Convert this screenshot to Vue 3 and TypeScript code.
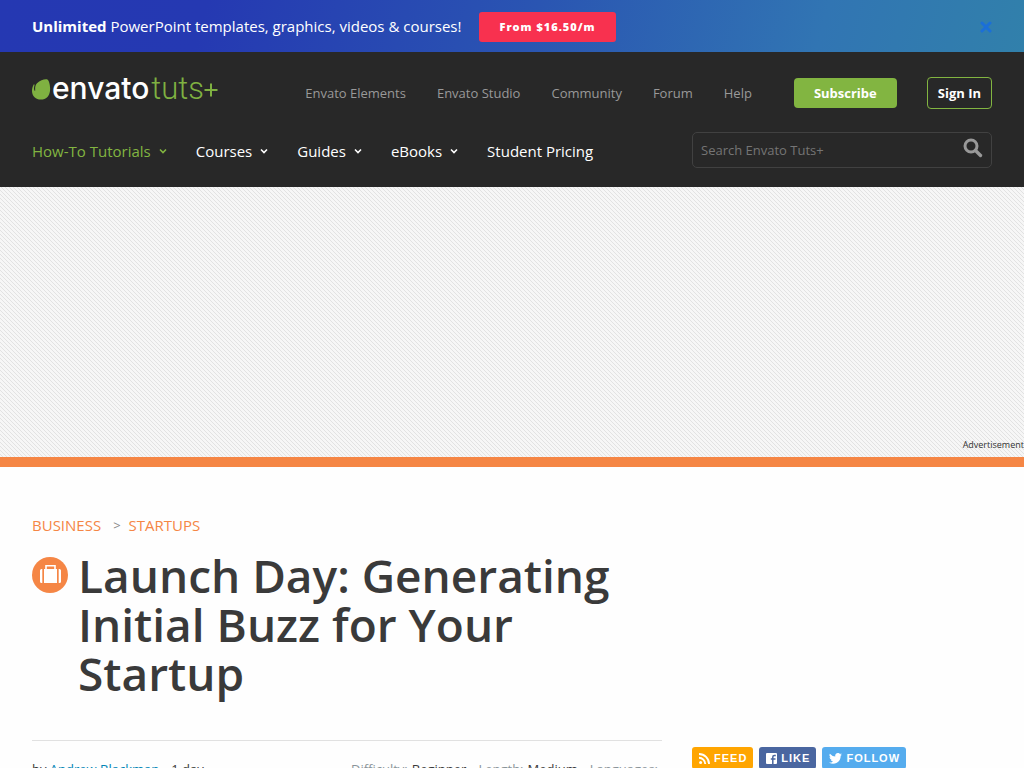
<script setup lang="ts">
import { ref } from 'vue'

interface NavItem {
  label: string
  menu: boolean
  active?: boolean
}

const siteLinks: string[] = ['Envato Elements', 'Envato Studio', 'Community', 'Forum', 'Help']
const sections: NavItem[] = [
  { label: 'How-To Tutorials', menu: true, active: true },
  { label: 'Courses', menu: true },
  { label: 'Guides', menu: true },
  { label: 'eBooks', menu: true },
  { label: 'Student Pricing', menu: false },
]
const query = ref('')
const promoOpen = ref(true)
</script>

<template>
  <div class="page">
    <div v-if="promoOpen" class="promo">
      <p class="promo-text"><strong>Unlimited</strong> PowerPoint templates, graphics, videos &amp; courses!</p>
      <a class="promo-cta" href="#">From $16.50/m</a>
      <button class="promo-close" type="button" aria-label="Close" @click="promoOpen = false">
        <svg width="12" height="12" viewBox="0 0 12 12" aria-hidden="true">
          <path d="M2 2L10 10M10 2L2 10" stroke="#1b6fd8" stroke-width="3" stroke-linecap="round" />
        </svg>
      </button>
    </div>

    <header class="header">
      <div class="top-row">
        <a class="logo" href="#" aria-label="Envato Tuts+">
          <svg class="leaf" width="19" height="21" viewBox="0 0 19 21" aria-hidden="true">
            <path d="M15.4 .4C13.400-.4 8.300.8 5 4.200C2.600 6.900 3.200 9.800 3.200 11.600C3.200 12.200 2.700 12.100 2.500 11.600C1.700 10 2 8.200 2.500 6.300C2.700 5.300 2 5 1.600 5.700C.5 7.600 0 9.500 0 11.900C0 17 3.900 20.500 8.800 20.500C14.300 20.500 17.300 17 18 11.900C18.600 7.300 17.300 1.800 15.400 .4Z" fill="#7fb141" />
          </svg>
          <span class="logo-text"><span class="logo-main">envato</span><span class="logo-sub">tuts</span></span>
          <svg class="plus" width="14" height="14" viewBox="0 0 14 14" aria-hidden="true"><path d="M7 0.500V13.500M.5 7H13.500" stroke="#7fb141" stroke-width="2" /></svg>
        </a>
        <nav class="site-nav" aria-label="Envato sites">
          <a v-for="link in siteLinks" :key="link" href="#">{{ link }}</a>
        </nav>
        <a class="subscribe" href="#">Subscribe</a>
        <a class="sign-in" href="#">Sign In</a>
      </div>

      <div class="bottom-row">
        <nav class="main-nav" aria-label="Main">
          <a v-for="item in sections" :key="item.label" href="#" :class="{ active: item.active }">
            {{ item.label }}
            <svg v-if="item.menu" width="8" height="6" viewBox="0 0 8 6" aria-hidden="true">
              <path d="M1 1.500L4 4.500L7 1.500" fill="none" stroke="currentColor" stroke-width="1.600" />
            </svg>
          </a>
        </nav>
        <form class="search" role="search" @submit.prevent>
          <input v-model="query" type="search" aria-label="Search" placeholder="Search Envato Tuts+">
          <button type="submit" aria-label="Search">
            <svg width="20" height="20" viewBox="0 0 20 20" aria-hidden="true">
              <circle cx="8" cy="8" r="6" fill="none" stroke="#999" stroke-width="3" />
              <path d="M12.500 12.500L17.500 17.500" stroke="#999" stroke-width="3.400" stroke-linecap="round" />
            </svg>
          </button>
        </form>
      </div>
    </header>

    <aside class="ad"><span>Advertisement</span></aside>

    <main class="content">
      <article class="post">
        <nav class="crumbs" aria-label="Breadcrumb">
          <a href="#">BUSINESS</a><span>&gt;</span><a href="#">STARTUPS</a>
        </nav>
        <div class="title-row">
          <svg class="badge" width="36" height="36" viewBox="0 0 36 36" aria-hidden="true">
            <circle cx="18" cy="18" r="18" fill="#f58645" />
            <path d="M14 12V8.800H23V12" fill="none" stroke="#fff" stroke-width="1.600" />
            <path d="M12 12H25V26H12Z" fill="#fff" />
            <path d="M10.300 12V26H9.500Q8 26 8 24.500V13.500Q8 12 9.500 12ZM26.700 12V26H27.500Q29 26 29 24.500V13.500Q29 12 27.500 12Z" fill="#fff" />
          </svg>
          <h1>Launch Day: Generating Initial Buzz for Your Startup</h1>
        </div>
        <div class="meta">
          <div class="byline">by <a href="#">Andrew Blackman</a><time>1 day</time></div>
          <dl class="facts">
            <div><dt>Difficulty:</dt><dd>Beginner</dd></div>
            <div><dt>Length:</dt><dd>Medium</dd></div>
            <div><dt>Languages:</dt></div>
          </dl>
        </div>
      </article>

      <aside class="social">
        <a class="feed" href="#">
          <svg width="11" height="11" viewBox="0 0 11 11" aria-hidden="true">
            <circle cx="1.600" cy="9.400" r="1.500" fill="#fff" />
            <path d="M0 4.800A6.200 6.200 0 0 1 6.200 11M0 1A10 10 0 0 1 10 11" fill="none" stroke="#fff" stroke-width="1.900" />
          </svg>FEED
        </a>
        <a class="like" href="#">
          <svg width="11" height="11" viewBox="0 0 11 11" aria-hidden="true">
            <rect width="11" height="11" rx="1" fill="#fff" />
            <path d="M6.800 11V6.700M9.800 2.500H8.400Q6.800 2.500 6.800 4V6.700M4.800 6H9.500" fill="none" stroke="#4a66a0" stroke-width="1.500" />
          </svg>LIKE
        </a>
        <a class="follow" href="#">
          <svg width="13" height="11" viewBox="0 0 24 20" aria-hidden="true">
            <path d="M24 2.400a10 10 0 0 1-2.800.8A5 5 0 0 0 23.300.5a10 10 0 0 1-3.100 1.200A4.900 4.900 0 0 0 11.700 6.200 14 14 0 0 1 1.700 1a4.900 4.900 0 0 0 1.500 6.600 5 5 0 0 1-2.200-.6 4.900 4.900 0 0 0 3.900 4.900 5 5 0 0 1-2.200.1 4.900 4.900 0 0 0 4.600 3.400A9.900 9.900 0 0 1 0 17.500 14 14 0 0 0 21.500 5.100 10 10 0 0 0 24 2.400Z" fill="#fff" />
          </svg>FOLLOW
        </a>
      </aside>
    </main>
  </div>
</template>

<style>
html, body {
  margin: 0;
  background: #fefefe;
}
body {
  height: 100vh;
  overflow: hidden;
}
</style>

<style scoped>
.page {
  font-family: "Open Sans", "Noto Sans", sans-serif;
  font-size: 14px;
  color: #3a3a3a;
}
a {
  color: inherit;
  text-decoration: none;
}
button {
  border: 0;
  padding: 0;
  background: none;
  cursor: pointer;
}
svg {
  display: block;
  flex: none;
}
.promo {
  display: flex;
  align-items: center;
  gap: 18px;
  box-sizing: border-box;
  height: 52px;
  padding: 2px 32px 0;
  background: linear-gradient(105deg, #2538b2 0%, #2539b2 20%, #2a55b2 52%, #3175b3 80%, #3180ab 100%);
  color: #fff;
}
.promo-text {
  margin: 0 0 2px;
  font-size: 15px;
  white-space: nowrap;
}
.promo-cta {
  padding: 0 20px;
  border-radius: 3px;
  background: #f8314f;
  font-size: 11px;
  font-weight: 800;
  line-height: 30px;
  letter-spacing: 1px;
  white-space: nowrap;
}
.promo-close {
  margin-left: auto;
}
.header {
  padding: 25px 32px 19px;
  background: #282828;
}
.top-row {
  display: flex;
  align-items: center;
  height: 32px;
}
.logo {
  display: flex;
  align-items: center;
  height: 26px;
  margin-bottom: 10px;
  color: #fff;
}
.leaf {
  margin-top: 2px;
}
.logo-text {
  display: flex;
  align-items: baseline;
  margin-left: 1px;
}
.logo-main {
  font: 500 30px/26px Inter, sans-serif;
}
.logo-sub {
  margin-left: 2px;
  color: #7fb141;
  font: 300 31px/26px Roboto, sans-serif;
}
.plus {
  margin-top: 4px;
}
.site-nav {
  display: flex;
  gap: 31px;
  margin-left: auto;
  color: #999;
  font-size: 13px;
  white-space: nowrap;
}
.subscribe,
.sign-in {
  box-sizing: border-box;
  border-radius: 4px;
  color: #fff;
  font-size: 13px;
  font-weight: 700;
  white-space: nowrap;
}
.subscribe {
  margin-left: 42px;
  padding: 0 20px;
  background: #82b541;
  line-height: 30px;
}
.sign-in {
  margin-left: 30px;
  padding: 0 10px;
  border: 1px solid #82b541;
  line-height: 30px;
}
.bottom-row {
  display: flex;
  align-items: center;
  justify-content: space-between;
  margin-top: 23px;
}
.main-nav {
  display: flex;
  gap: 29px;
  padding-top: 2px;
  color: #fff;
  font-size: 15px;
  white-space: nowrap;
}
.main-nav a {
  display: flex;
  align-items: center;
  gap: 8px;
}
.main-nav .active {
  color: #82b541;
}
.search {
  display: flex;
  box-sizing: border-box;
  width: 300px;
  height: 36px;
  border: 1px solid #414141;
  border-radius: 5px;
}
.search input {
  flex: 1;
  min-width: 0;
  padding: 0 8px;
  border: 0;
  outline: 0;
  background: none;
  color: #ccc;
  font: 13px "Open Sans", "Noto Sans", sans-serif;
}
.search input::placeholder {
  color: #757575;
}
.search button {
  padding: 0 8px 4px 0;
}
.ad {
  display: flex;
  align-items: flex-end;
  justify-content: flex-end;
  box-sizing: border-box;
  height: 280px;
  border-bottom: 10px solid #f58645;
  padding-bottom: 5px;
  background-color: #f6f6f6;
  background-image: linear-gradient(45deg, #e2e2e2 12.5%, transparent 12.5% 50%, #e2e2e2 50% 62.5%, transparent 62.5%);
  background-size: 4px 4px;
  color: #333;
  font-size: 9px;
  line-height: 15px;
}
.content {
  display: grid;
  grid-template-columns: minmax(0, 1fr) 300px;
  gap: 30px;
  padding: 48px 32px 0;
}
.crumbs {
  display: flex;
  color: #f58645;
  font-size: 15px;
  line-height: 20px;
}
.crumbs span {
  margin: 0 8px 0 12px;
  color: #888;
  font-size: 13px;
}
.title-row {
  display: flex;
  gap: 10px;
  margin-top: 16px;
}
.badge {
  margin-top: 6px;
}
h1 {
  margin: 0;
  max-width: 570px;
  font-size: 46px;
  font-weight: 600;
  line-height: 49px;
}
.meta {
  display: flex;
  justify-content: space-between;
  margin-top: 42px;
  padding: 19px 4px 20px 0;
  border-top: 1px solid #e1e1e1;
  font-size: 13px;
  line-height: 18px;
  white-space: nowrap;
}
.byline a {
  color: #0085b6;
}
.byline time {
  margin-left: 12px;
}
.facts {
  display: flex;
  gap: 12px;
  margin: 0;
}
.facts div {
  display: flex;
  gap: 4px;
}
.facts dt {
  color: #8a9499;
}
.facts dd {
  margin: 0;
}
.social {
  display: flex;
  align-items: flex-start;
  gap: 6px;
  margin-top: 232px;
  color: #fff;
  font: 700 11px/22px "Liberation Sans", Arial, sans-serif;
  letter-spacing: 1px;
}
.social a {
  display: flex;
  align-items: center;
  gap: 4px;
  padding: 0 6px 0 7px;
  border-radius: 3px;
}
.feed {
  background: #ffa500;
}
.like {
  background: #4a66a0;
}
.follow {
  background: #55acee;
}
</style>
